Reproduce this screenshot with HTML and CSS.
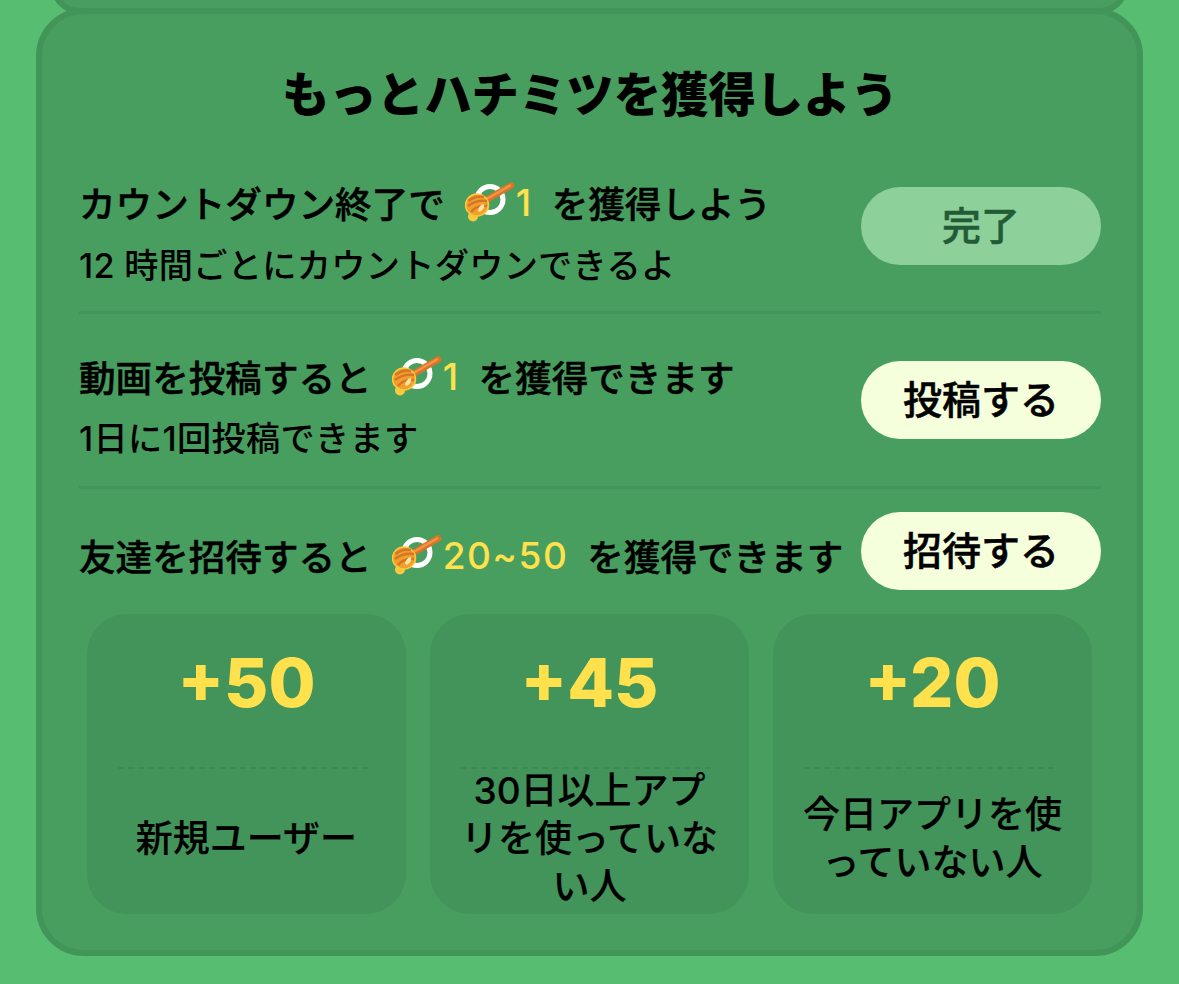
FILE: index.html
```html
<!DOCTYPE html>
<html lang="ja">
<head>
    <meta charset="UTF-8">
    <meta name="viewport" content="width=device-width, initial-scale=1.0">
    <title>もっとハチミツを獲得しよう</title>
    <link rel="stylesheet" href="styles.css">
</head>
<body>
    <svg class="icon-defs" width="0" height="0">
        <symbol id="honey" viewBox="0 0 50 40">
            <circle cx="25" cy="17.500" r="13" fill="none" stroke="#fff" stroke-width="5"/>
            <path d="M16 21 L46 3.500" stroke="#dc7426" stroke-width="6.500" stroke-linecap="round"/>
            <path d="M19 18.500 L45 3.500" stroke="#f0964a" stroke-width="2.500" stroke-linecap="round"/>
            <circle cx="8" cy="34.500" r="5" fill="#fbc93f"/>
            <ellipse cx="12" cy="23" rx="11.500" ry="11" fill="#f2a02a" stroke="#fbc93f" stroke-width="1.500"/>
            <path d="M3.500 19 C8 15 14 14 19 15 M3 24 C8 20 14 18 22 19 M6 30 C10 25 15 23 22 24" fill="none" stroke="#d4752a" stroke-width="2.600"/>
            <path d="M13 28 C14 25 16 22 19 22 C20 25 18 29 14 30 Z" fill="#fde3a0"/>
        </symbol>
    </svg>

    <div class="prev-card"></div>

    <div class="card">
        <h1 class="title">もっとハチミツを獲得しよう</h1>

        <div class="task task-first">
            <div class="task-text">
                <div class="task-main">カウントダウン終了で<svg class="honey"><use href="#honey"/></svg><span class="reward">1</span><span class="after">を獲得しよう</span></div>
                <div class="task-sub">12 時間ごとにカウントダウンできるよ</div>
            </div>
            <div class="btn btn-done">完了</div>
        </div>

        <div class="task task-second">
            <div class="task-text">
                <div class="task-main">動画を投稿すると<svg class="honey"><use href="#honey"/></svg><span class="reward">1</span><span class="after">を獲得できます</span></div>
                <div class="task-sub">1日に1回投稿できます</div>
            </div>
            <div class="btn">投稿する</div>
        </div>

        <div class="task task-last">
            <div class="task-main">友達を招待すると<svg class="honey"><use href="#honey"/></svg><span class="reward">20~50</span><span class="after">を獲得できます</span></div>
            <div class="btn">招待する</div>
        </div>

        <div class="bonus-list">
            <div class="bonus">
                <div class="bonus-num">+50</div>
                <div class="bonus-line"></div>
                <div class="bonus-label">新規ユーザー</div>
            </div>
            <div class="bonus">
                <div class="bonus-num">+45</div>
                <div class="bonus-line"></div>
                <div class="bonus-label">30日以上アプ<br>リを使っていな<br>い人</div>
            </div>
            <div class="bonus">
                <div class="bonus-num">+20</div>
                <div class="bonus-line"></div>
                <div class="bonus-label">今日アプリを使<br>っていない人</div>
            </div>
        </div>
    </div>
</body>
</html>
```

FILE: styles.css
```css
* {
    box-sizing: border-box;
}

html,
body {
    height: 984px;
    overflow: hidden;
}

body {
    margin: 0;
    background: #57bd71;
    color: #000;
    font-family: "Inter", "Noto Sans CJK JP", sans-serif;
}

.icon-defs {
    display: block;
}

.prev-card {
    height: 60px;
    margin: -46px 50px 0;
    background: #489e5f;
    border: 6px solid #429559;
    border-radius: 48px;
}

.card {
    height: 948px;
    margin: -6px 36px 0;
    padding: 0 36px 0 37px;
    background: #489e5f;
    border: 6px solid #429559;
    border-radius: 48px;
}

.title {
    margin: 0;
    height: 130px;
    padding-top: 48px;
    font-size: 47.4px;
    line-height: 66px;
    font-weight: 900;
    text-align: center;
}

.task {
    display: flex;
    justify-content: space-between;
    align-items: flex-start;
}

.task-first {
    height: 170px;
    padding-top: 28px;
    border-bottom: 3px solid #429559;
}

.task-second {
    height: 175px;
    padding-top: 32px;
    border-bottom: 3px solid #429559;
}

.task-last {
    height: 125px;
    padding-top: 23px;
}

.task-main {
    display: flex;
    align-items: center;
    height: 60px;
    font-size: 36.6px;
    font-weight: 500;
    -webkit-text-stroke: 0.5px #000;
    white-space: nowrap;
}

.task-last .task-main {
    margin-top: 13px;
}

.task-sub {
    height: 60px;
    margin-top: 4px;
    font-size: 34.2px;
    line-height: 60px;
    font-weight: 500;
    letter-spacing: 0.3px;
    white-space: nowrap;
}

.task-second .task-sub {
    margin-top: 3px;
}

.honey {
    flex: none;
    width: 50px;
    height: 40px;
    margin: 0 1px 0 20px;
}

.reward {
    color: #ffe14d;
    font-size: 37px;
    font-weight: 500;
    letter-spacing: 1.5px;
    -webkit-text-stroke: 0;
}

.after {
    margin-left: 19px;
}

.btn {
    flex: none;
    width: 240px;
    height: 78px;
    margin-top: 15px;
    border-radius: 39px;
    background: #f5ffdc;
    font-size: 39px;
    font-weight: 500;
    -webkit-text-stroke: 0.5px currentColor;
    line-height: 78px;
    text-align: center;
}

.task-last .btn {
    margin-top: 0;
}

.btn-done {
    background: #8dd09a;
    color: #235b37;
}

.bonus-list {
    display: grid;
    grid-template-columns: repeat(3, 319px);
    gap: 24px;
    margin: 0 8px;
}

.bonus {
    height: 300px;
    border-radius: 40px;
    background: #43945a;
    text-align: center;
}

.bonus-num {
    height: 153px;
    padding-top: 27px;
    color: #ffe14d;
    font-size: 68px;
    line-height: 82px;
    font-weight: 800;
}

.bonus-line {
    margin: 0 38px 0 31px;
    border-top: 2px dashed #3d8a53;
}

.bonus-label {
    display: flex;
    align-items: center;
    justify-content: center;
    height: 139px;
    font-size: 37px;
    line-height: 48px;
    font-weight: 500;
    -webkit-text-stroke: 0.2px #000;
}
```
